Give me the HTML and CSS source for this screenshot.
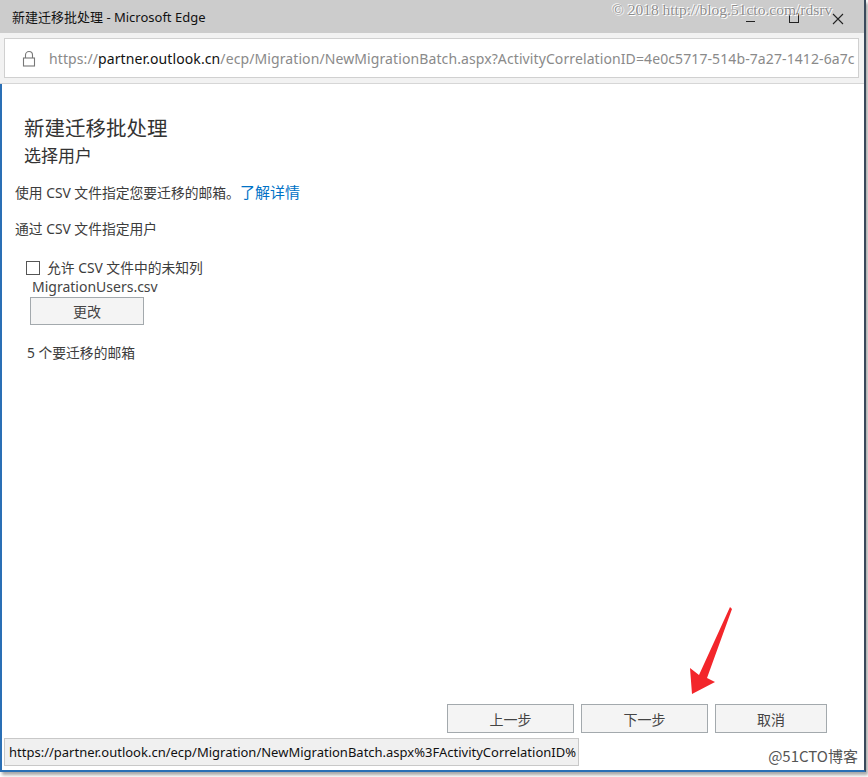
FILE: index.html
```html
<!DOCTYPE html>
<html lang="zh-CN">
<head>
<meta charset="utf-8">
<title>新建迁移批处理 - Microsoft Edge</title>
<link rel="stylesheet" href="styles.css">
</head>
<body>
<div class="window">
  <div class="titlebar">
    <span class="title">新建迁移批处理 - Microsoft Edge</span>
    <div class="controls">
      <span class="ctl min"><span></span></span>
      <span class="ctl max"><span></span></span>
      <span class="ctl close">
        <svg width="12" height="12" viewBox="0 0 12 12"><path d="M1 1L11 11M11 1L1 11" stroke="#222" stroke-width="1.1"/></svg>
      </span>
    </div>
  </div>
  <div class="addrwrap">
    <div class="addr">
      <svg class="lock" width="14" height="17" viewBox="0 0 14 17"><path d="M3.5 8V5a3.5 3.5 0 0 1 7 0v3" fill="none" stroke="#777" stroke-width="1.1"/><rect x="1.5" y="8" width="11" height="8" fill="none" stroke="#777" stroke-width="1.1"/></svg>
      <span class="url"><span class="dim">https://</span>partner.outlook.cn<span class="dim">/ecp/Migration/NewMigrationBatch.aspx?ActivityCorrelationID=4e0c5717-514b-7a27-1412-6a7c</span></span>
    </div>
  </div>
  <div class="content">
    <div class="page">
      <h1 class="h1">新建迁移批处理</h1>
      <h2 class="h2">选择用户</h2>
      <p class="desc">使用 CSV 文件指定您要迁移的邮箱。<a class="link" href="#">了解详情</a></p>
      <p class="label">通过 CSV 文件指定用户</p>
      <label class="check"><span class="box"></span>允许 CSV 文件中的未知列</label>
      <div class="file">MigrationUsers.csv</div>
      <button class="btn change">更改</button>
      <p class="count">5 个要迁移的邮箱</p>
    </div>
    <div class="footer">
      <button class="btn nav">上一步</button>
      <button class="btn nav">下一步</button>
      <button class="btn nav cancel">取消</button>
    </div>
    <div class="bottom">
      <div class="status">https://partner.outlook.cn/ecp/Migration/NewMigrationBatch.aspx%3FActivityCorrelationID%</div>
      <div class="brand">@51CTO博客</div>
    </div>
  </div>
  <div class="watermark">© 2018 http://blog.51cto.com/rdsrv</div>
  <svg class="arrow" width="60" height="100" viewBox="0 0 60 100"><path d="M44 1 L46 3 L21 72 L29 76 L6 88 L4 62 L13 69 Z" fill="#f3262b"/></svg>
</div>
</body>
</html>
```
FILE: styles.css
```css
* { box-sizing: border-box; }
html, body { margin: 0; padding: 0; background: #fff; }
body {
  width: 868px; height: 777px; overflow: hidden;
  font-family: "Noto Sans", "Noto Sans CJK SC", sans-serif;
  color: #3c3c3c;
}
.window {
  position: relative;
  width: 866px; height: 772px;
  display: flex; flex-direction: column;
  border-right: 2px solid #3a4a5c;
  border-bottom: 2px solid #2a6fb5;
  box-shadow: 2px 3px 3px rgba(0,0,0,0.35);
}
.titlebar {
  height: 33px; background: #cccccc;
  display: flex; align-items: center; justify-content: space-between;
  padding-left: 12px;
}
.title { font-size: 13px; color: #111; }
.controls { display: flex; height: 100%; margin-right: 4px; }
.ctl { width: 44px; height: 100%; display: flex; align-items: center; justify-content: center; }
.min span { width: 9px; border-top: 1px solid #222; margin-top: 10px; }
.max span { width: 10px; height: 10px; border: 1px solid #222; margin-top: 2px; }
.close svg { margin-top: 4px; }
.addrwrap {
  height: 51px; background: #f2f2f2; padding: 5px 5px 5px 4px;
  border-bottom: 1px solid #d6d6d6;
}
.addr {
  height: 40px; background: #fff; border: 1px solid #d0d0d0;
  display: flex; align-items: center; padding-left: 17px; overflow: hidden; white-space: nowrap;
}
.lock { margin-right: 13px; flex: none; }
.url { font-size: 14px; color: #111; letter-spacing: 0.1px; }
.dim { color: #8a8a8a; }
.content {
  flex: 1; display: flex; flex-direction: column;
  border-left: 2px solid #2a6fb5;
}
.page { flex: 1; padding: 30px 0 0 13px; }
.h1 { margin: 0 0 0 9px; font-size: 20.5px; font-weight: normal; line-height: 28px; color: #333; }
.h2 { margin: 0 0 0 9px; font-size: 17px; font-weight: normal; line-height: 28px; color: #333; }
.desc { margin: 12px 0 0; font-size: 13.8px; line-height: 20px; }
.link { color: #0072c6; text-decoration: none; font-size: 15px; }
.label { margin: 16px 0 0; font-size: 13.8px; line-height: 20px; }
.check { display: flex; align-items: center; margin: 19px 0 0 11px; font-size: 13.8px; line-height: 20px; }
.box { width: 14px; height: 14px; border: 1px solid #555; background: #fff; margin-right: 7px; }
.file { margin: 0 0 0 17px; font-size: 14px; line-height: 18px; color: #444; }
.btn {
  font-family: "Noto Sans", "Noto Sans CJK SC", sans-serif;
  background: #f4f4f4; border: 1px solid #a3a9ad; color: #444; font-size: 14px; padding: 0;
}
.change { margin: 1px 0 0 15px; width: 114px; height: 28px; }
.count { margin: 18px 0 0 12px; font-size: 13.8px; line-height: 20px; }
.footer { display: flex; justify-content: flex-end; gap: 7px; padding-right: 37px; margin-bottom: 4px; }
.nav { width: 127px; height: 29px; }
.cancel { width: 112px; }
.bottom { display: flex; justify-content: space-between; align-items: flex-end; height: 33px; padding-bottom: 4px; }
.status {
  margin-left: 2px; background: #f0f0f0; border: 1px solid #c8c8c8;
  height: 28px; width: 575px; font-size: 13px; color: #111; padding: 4px 0 0 4px; white-space: nowrap; overflow: hidden;
}
.brand { font-family: "Noto Sans CJK SC", sans-serif; font-size: 15px; color: #555; margin-right: 6px; }
.watermark {
  position: absolute; left: 612px; top: 1px;
  font-family: "Liberation Serif", "DejaVu Serif", serif; font-size: 15.5px;
  color: #8c8c8c; text-shadow: 0 0 1px #fff, 1px 1px 0 #fff, -1px -1px 0 #fff; white-space: nowrap;
}
.arrow { position: absolute; left: 686px; top: 606px; }
```
